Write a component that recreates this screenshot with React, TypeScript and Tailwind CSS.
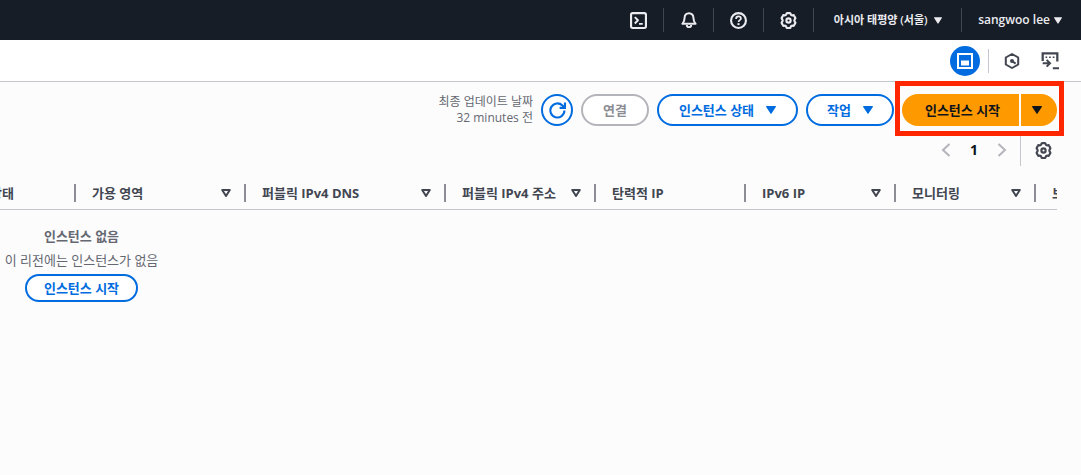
import type { ReactNode } from "react";

type IconProps = { className?: string };

function Svg({ className = "size-4", children }: { className?: string; children: ReactNode }) {
  return (
    <svg
      viewBox="0 0 16 16"
      className={className}
      fill="none"
      stroke="currentColor"
      strokeWidth="2"
      strokeLinejoin="round"
      aria-hidden="true"
    >
      {children}
    </svg>
  );
}

const Caret = ({ className = "w-[10px] h-2" }: IconProps) => (
  <svg viewBox="0 0 10 8" className={`shrink-0 ${className}`} fill="currentColor" aria-hidden="true">
    <path d="M.6 0h8.8c.5 0 .7.5.4.9L5.5 7.6c-.2.4-.8.4-1 0L.2.9C-.1.5.1 0 .6 0z" />
  </svg>
);

const SortIcon = () => (
  <svg viewBox="0 0 10 8" className="h-2 w-[10px] shrink-0" fill="none" stroke="currentColor" strokeWidth="2" strokeLinejoin="round" aria-hidden="true">
    <path d="M1.2 1h7.6L5 7z" />
  </svg>
);

const ShellIcon = () => (
  <Svg className="size-[17px]">
    <rect x="1" y="1" width="14" height="14" rx="1.5" />
    <path d="M4.500 4.800 7.500 7.800 4.500 10.800M8.500 11.200H12" strokeWidth="1.800" />
  </Svg>
);

const BellIcon = () => (
  <Svg>
    <path d="M8 1.200c-2.700 0-4.400 2-4.400 4.500C3.600 8.500 3 9.800 1.400 11.800h13.200C13 9.800 12.400 8.500 12.400 5.700 12.400 3.200 10.700 1.200 8 1.200z" />
    <path d="M5.800 13a2.200 2.200 0 0 0 4.400 0" />
  </Svg>
);

const HelpIcon = () => (
  <Svg className="size-[17px]">
    <circle cx="8" cy="8" r="7" />
    <path d="M5.700 6.500C5.700 5 6.700 4.200 8 4.200s2.300.8 2.300 2c0 1.400-2.300 1.600-2.300 3.300" strokeWidth="1.600" />
    <path d="M8 10.500v1.800" />
  </Svg>
);

const GearIcon = () => (
  <Svg className="size-[17px]">
    <path d="M6.700 1h2.600c.4 0 .6.300.7.700.2 1.200 1 1.700 2.100 1.300.4-.2.800-.1 1 .3l1.300 2.200c.2.400.1.700-.2 1-.9.700-.9 2.300 0 3 .3.300.4.600.2 1l-1.300 2.200c-.2.400-.6.500-1 .3-1.100-.4-1.900.100-2.100 1.300-.1.400-.3.700-.7.700H6.700c-.4 0-.6-.3-.7-.7-.2-1.200-1-1.700-2.100-1.300-.4.200-.8.100-1-.3l-1.300-2.200c-.2-.4-.1-.7.2-1 .9-.7.900-2.300 0-3-.3-.3-.4-.6-.2-1l1.300-2.200c.2-.4.6-.5 1-.3C5 3.400 5.800 2.900 6 1.700c.1-.4.3-.7.7-.7z" />
    <circle cx="8" cy="8" r="2" />
  </Svg>
);

const RefreshIcon = () => (
  <Svg className="size-[17px]">
    <path d="M14.500 8A6.600 6.600 0 1 1 12.600 3.300L14.700 5" />
    <path d="M15 .5V5.500H10" strokeLinejoin="miter" />
  </Svg>
);

const PanelIcon = () => (
  <Svg>
    <path d="M1 1h14v14H1z" strokeLinejoin="miter" />
    <path d="M5 8.500h6v3H5z" fill="currentColor" strokeLinejoin="miter" />
  </Svg>
);

const HexIcon = () => (
  <Svg>
    <path d="M8 1 14.200 4.500v7L8 15 1.800 11.500v-7z" />
    <circle cx="8" cy="8" r="2" fill="currentColor" stroke="none" />
    <path d="m8 8 3.600 2.600" />
  </Svg>
);

const TerminalIcon = () => (
  <Svg className="size-[18px]">
    <path d="M1.500 8V1.200h13V8.500" strokeLinejoin="miter" />
    <path d="M4 4.600h1.500M7.200 4.600h1.500M10.400 4.600H12" strokeWidth="1.400" />
    <path d="M1.500 10h6M5 7l3 3-3 3M10.500 14.500H16" strokeWidth="1.800" strokeLinejoin="miter" />
  </Svg>
);

function NavDivider() {
  return <span className="h-6 w-px bg-[#424650]" />;
}

function NavIcon({ label, children }: { label: string; children: ReactNode }) {
  return (
    <>
      <button type="button" aria-label={label} className="flex h-8 w-[49px] items-center justify-center">
        {children}
      </button>
      <NavDivider />
    </>
  );
}

const columns = [
  { name: "가용 영역", width: "w-[170px]", sortable: true },
  { name: "퍼블릭 IPv4 DNS", width: "w-[200px]", sortable: true },
  { name: "퍼블릭 IPv4 주소", width: "w-[150px]", sortable: true },
  { name: "탄력적 IP", width: "w-[150px]", sortable: false },
  { name: "IPv6 IP", width: "w-[150px]", sortable: true },
  { name: "모니터링", width: "w-[140px]", sortable: true },
];

const outline =
  "flex items-center justify-center rounded-full border-2 border-[#006ce0] bg-white font-bold text-[#006ce0]";

export default function App() {
  return (
    <div className="min-h-screen bg-[#fcfcfd] font-['Open_Sans','Noto_Sans_CJK_KR',sans-serif] text-[13px] leading-5 text-[#424650]">
      <header className="flex h-10 items-center justify-end bg-[#161d26] pr-[19px] text-[12px] font-semibold text-[#ebebf0]">
        <NavIcon label="CloudShell"><ShellIcon /></NavIcon>
        <NavIcon label="알림"><BellIcon /></NavIcon>
        <NavIcon label="지원"><HelpIcon /></NavIcon>
        <NavIcon label="설정"><GearIcon /></NavIcon>
        <button type="button" className="flex w-[147px] items-center justify-center gap-[6px] whitespace-nowrap text-[11px]">
          아시아 태평양 (서울)
          <Caret className="h-[7px] w-2" />
        </button>
        <NavDivider />
        <button type="button" className="ml-4 flex items-center gap-1 whitespace-nowrap">
          sangwoo lee
          <Caret className="h-[7px] w-2" />
        </button>
      </header>

      <div className="flex h-[42px] items-center justify-end border-b border-[#c6c6cd] bg-white pr-[22px]">
        <button type="button" aria-label="분할 패널" className="flex size-[30px] items-center justify-center rounded-full bg-[#006ce0] text-white">
          <PanelIcon />
        </button>
        <span className="ml-2 h-6 w-px bg-[#c6c6cd]" />
        <button type="button" aria-label="Amazon Q" className="ml-[15px]"><HexIcon /></button>
        <button type="button" aria-label="터미널" className="ml-[21px]"><TerminalIcon /></button>
      </div>

      <main className="pr-6 pt-3">
        <div className="flex items-center justify-end gap-2">
          <p className="text-right text-[12px] leading-4 text-[#656871]">
            최종 업데이트 날짜
            <br />
            32 minutes 전
          </p>
          <button type="button" aria-label="새로 고침" className={`${outline} size-8`}>
            <RefreshIcon />
          </button>
          <button type="button" disabled className="h-8 w-[68px] rounded-full border-2 border-[#b4b4bb] bg-white font-bold text-[#8c8c94]">
            연결
          </button>
          <button type="button" className={`${outline} h-8 w-[141px] gap-3`}>
            인스턴스 상태
            <Caret />
          </button>
          <button type="button" className={`${outline} h-8 w-[88px] gap-3`}>
            작업
            <Caret />
          </button>
          <div className="relative flex gap-[2px] font-bold text-[#0f141a]">
            <button type="button" className="h-8 w-[117px] rounded-l-full bg-[#ff9900] pl-1">
              인스턴스 시작
            </button>
            <button type="button" aria-label="시작 옵션" className="flex h-8 w-9 items-center justify-center rounded-r-full bg-[#ff9900] pr-1">
              <Caret />
            </button>
            <span className="pointer-events-none absolute -inset-x-[7px] -bottom-[10px] -top-[13px] border-[5px] border-[#ff2600]" />
          </div>
        </div>

        <nav aria-label="페이지" className="mt-2 flex h-8 items-center justify-end pr-[5px]">
          <button type="button" aria-label="이전" className="text-[#b4b4bb]">
            <Svg><path d="M11.500 2 5 8l6.500 6" strokeLinejoin="miter" /></Svg>
          </button>
          <button type="button" className="w-10 text-[14px] font-bold text-[#0f141a]">1</button>
          <button type="button" aria-label="다음" className="text-[#b4b4bb]">
            <Svg><path d="M4.500 2 11 8l-6.500 6" strokeLinejoin="miter" /></Svg>
          </button>
          <span className="ml-[10px] h-8 w-px bg-[#c6c6cd]" />
          <button type="button" aria-label="기본 설정" className="ml-[14px]"><GearIcon /></button>
        </nav>

        <div className="mt-[11px] overflow-hidden">
          <table className="w-full table-fixed border-collapse">
            <thead>
              <tr className="h-8 border-b border-[#c6c6cd] text-left">
                <th scope="col" className="w-[76px] p-0">
                  <div className="-ml-[10px] flex h-[18px] items-center whitespace-nowrap border-r-2 border-[#8c8c94]">상태</div>
                </th>
                {columns.map((c) => (
                  <th key={c.name} scope="col" className={`${c.width} p-0`}>
                    <div className="flex h-[18px] items-center justify-between whitespace-nowrap border-r-2 border-[#8c8c94] pl-4 pr-[13px]">
                      {c.name}
                      {c.sortable && <SortIcon />}
                    </div>
                  </th>
                ))}
                <th scope="col" className="overflow-hidden whitespace-nowrap p-0 pl-4">보안 그룹 이름</th>
              </tr>
            </thead>
            <tbody>
              <tr>
                <td colSpan={8} className="p-0 pt-4">
                  <div className="flex w-[163px] flex-col items-center whitespace-nowrap text-[#656871]">
                    <strong>인스턴스 없음</strong>
                    <p className="mt-1">이 리전에는 인스턴스가 없음</p>
                    <button type="button" className={`${outline} mt-1 h-7 w-[113px]`}>인스턴스 시작</button>
                  </div>
                </td>
              </tr>
            </tbody>
          </table>
        </div>
      </main>
    </div>
  );
}
